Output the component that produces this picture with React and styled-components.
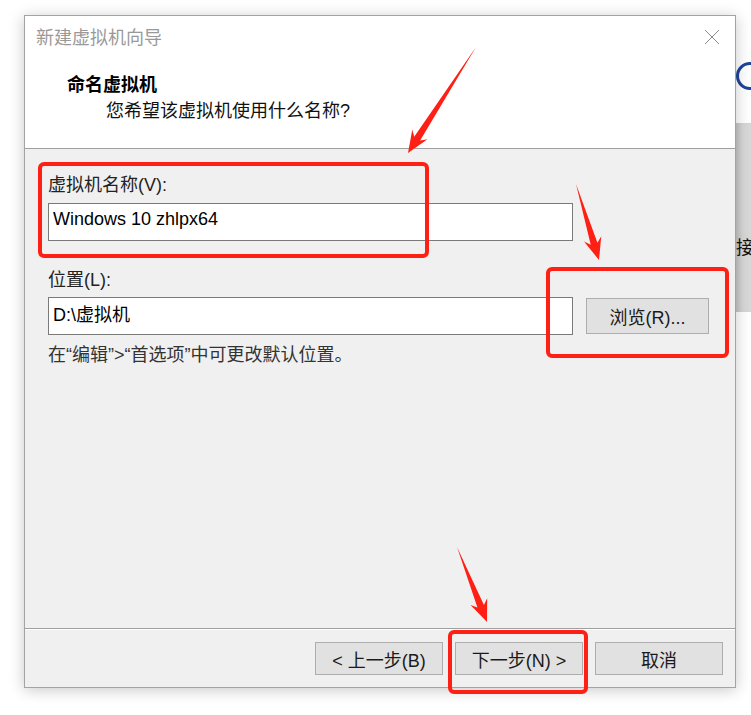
import React from 'react';
import styled, { createGlobalStyle } from 'styled-components';

const GlobalStyle = createGlobalStyle`
  html, body {
    margin: 0;
    padding: 0;
    background: #ffffff;
  }
  body {
    font-family: 'Liberation Sans', 'Noto Sans CJK SC', sans-serif;
    color: #1a1a1a;
  }
`;

const FONT = `'Liberation Sans', 'Noto Sans CJK SC', sans-serif`;

const Page = styled.div`
  position: relative;
  width: 751px;
  height: 715px;
  overflow: hidden;
  display: flex;
  padding: 15px 0 0 24px;
  box-sizing: border-box;
`;

const Dialog = styled.div`
  position: relative;
  z-index: 1;
  flex: 0 0 712px;
  height: 673px;
  box-sizing: border-box;
  border: 1px solid #a3a3a3;
  background: #f0f0f0;
  box-shadow: 0 2px 14px rgba(0, 0, 0, 0.22);
  display: flex;
  flex-direction: column;
`;

const TitleBar = styled.div`
  height: 43px;
  background: #ffffff;
  display: flex;
  align-items: center;
  justify-content: space-between;
  padding: 0 15px 3px 11px;
  box-sizing: border-box;
`;

const Title = styled.div`
  font-family: 'Noto Sans CJK SC', sans-serif;
  font-size: 18px;
  line-height: 24px;
  color: #999999;
`;

const CloseBtn = styled.div`
  width: 16px;
  height: 16px;
  display: flex;
  margin-top: 2px;
`;

const Header = styled.div`
  height: 77px;
  padding: 12px 0 0 42px;
  background: #ffffff;
  border-bottom: 1px solid #a0a0a0;
`;

const Heading = styled.div`
  font-family: 'Noto Sans CJK SC', sans-serif;
  font-weight: 700;
  font-size: 18px;
  line-height: 24px;
  color: #000000;
`;

const SubHeading = styled.div`
  font-family: ${FONT};
  font-size: 18px;
  line-height: 24px;
  margin: 4px 0 0 39px;
  color: #111111;
`;

const Body = styled.div`
  flex: 1;
  padding: 24px 0 0 23px;
  display: flex;
  flex-direction: column;
`;

const Label = styled.div`
  font-family: ${FONT};
  font-size: 18px;
  line-height: 24px;
  color: #222222;
  margin-top: ${(p) => p.$top || 0}px;
`;

const Row = styled.div`
  display: flex;
  align-items: center;
  gap: 13px;
  margin-top: ${(p) => p.$top || 0}px;
`;

const TextBox = styled.div`
  width: 525px;
  height: 38px;
  box-sizing: border-box;
  background: #ffffff;
  border: 1px solid #7a7a7a;
  padding: 0 4px 6px;
  display: flex;
  align-items: center;
  font-family: ${FONT};
  font-size: 18px;
  color: #000000;
`;

const Button = styled.div`
  width: ${(p) => p.$w || 128}px;
  height: ${(p) => p.$h || 33}px;
  box-sizing: border-box;
  background: #e1e1e1;
  border: 1px solid #adadad;
  display: flex;
  align-items: center;
  justify-content: center;
  font-family: ${FONT};
  font-size: 18px;
  color: #1a1a1a;
`;

const Hint = styled(Label)`
  color: #333333;
`;

const Footer = styled.div`
  height: 45px;
  border-top: 1px solid #a0a0a0;
  box-shadow: inset 0 1px 0 #ffffff;
  padding: 13px 12px 0 0;
  display: flex;
  justify-content: flex-end;
  gap: 12px;
`;

const Behind = styled.div`
  flex: 1;
  display: flex;
  flex-direction: column;
`;

const Ring = styled.div`
  width: 28px;
  height: 28px;
  box-sizing: border-box;
  border: 3px solid #1f449a;
  border-radius: 50%;
  margin: 47px 0 0 0;
`;

const GreyPanel = styled.div`
  margin-top: 33px;
  height: 189px;
  background: #d8d8d8;
  box-shadow: inset 6px 0 6px -4px rgba(0, 0, 0, 0.12);
  font-family: 'Noto Sans CJK SC', sans-serif;
  font-size: 18px;
  line-height: 24px;
  color: #111111;
  padding-top: 111px;
  box-sizing: border-box;
`;

const Mark = styled.div`
  position: absolute;
  z-index: 2;
  left: ${(p) => p.$x}px;
  top: ${(p) => p.$y}px;
  width: ${(p) => p.$w}px;
  height: ${(p) => p.$h}px;
  box-sizing: border-box;
  border: 4px solid #fe2015;
  border-radius: 6px;
  pointer-events: none;
`;

const Overlay = styled.svg`
  position: absolute;
  z-index: 3;
  left: 0;
  top: 0;
  pointer-events: none;
`;

// arrow polygon: thin tail, widening shaft, barbed head
const arrowPoints = (tx, ty, px, py, head = 20, shaft = 7, wing = 9) => {
  const dx = px - tx;
  const dy = py - ty;
  const len = Math.hypot(dx, dy);
  const ux = dx / len;
  const uy = dy / len;
  const nx = -uy;
  const ny = ux;
  const bx = px - ux * head;
  const by = py - uy * head;
  const pts = [
    [tx, ty],
    [bx + (nx * shaft) / 2 + ux * 3, by + (ny * shaft) / 2 + uy * 3],
    [bx + nx * wing - ux * 2, by + ny * wing - uy * 2],
    [px, py],
    [bx - nx * wing - ux * 2, by - ny * wing - uy * 2],
    [bx - (nx * shaft) / 2 + ux * 3, by - (ny * shaft) / 2 + uy * 3],
  ];
  return pts.map((p) => p.join(',')).join(' ');
};

const arrows = [
  [476, 47, 408, 153],
  [576, 184, 599, 260],
  [457, 547, 487, 622],
];

const App = () => {
  return (
    <>
      <GlobalStyle />
      <Page>
        <Dialog>
          <TitleBar>
            <Title>新建虚拟机向导</Title>
            <CloseBtn>
              <svg width="16" height="16" viewBox="0 0 16 16">
                <path d="M1 1 L15 15 M15 1 L1 15" stroke="#8a8a8a" strokeWidth="1" fill="none" />
              </svg>
            </CloseBtn>
          </TitleBar>
          <Header>
            <Heading>命名虚拟机</Heading>
            <SubHeading>您希望该虚拟机使用什么名称?</SubHeading>
          </Header>
          <Body>
            <Label>虚拟机名称(V):</Label>
            <Row $top={6}>
              <TextBox>Windows 10 zhlpx64</TextBox>
            </Row>
            <Label $top={27}>位置(L):</Label>
            <Row $top={5}>
              <TextBox>D:\虚拟机</TextBox>
              <Button $w={123} $h={36}>浏览(R)...</Button>
            </Row>
            <Hint $top={8}>在“编辑”&gt;“首选项”中可更改默认位置。</Hint>
          </Body>
          <Footer>
            <Button>&lt; 上一步(B)</Button>
            <Button>下一步(N) &gt;</Button>
            <Button>取消</Button>
          </Footer>
        </Dialog>
        <Behind>
          <Ring />
          <GreyPanel>接</GreyPanel>
        </Behind>
        <Mark $x={38} $y={162} $w={391} $h={96} />
        <Mark $x={546} $y={267} $w={183} $h={91} />
        <Mark $x={448} $y={630} $w={140} $h={64} />
        <Overlay width="751" height="715" viewBox="0 0 751 715">
          {arrows.map(([tx, ty, px, py], i) => (
            <polygon key={i} points={arrowPoints(tx, ty, px, py)} fill="#fe2015" />
          ))}
        </Overlay>
      </Page>
    </>
  );
};

export default App;
